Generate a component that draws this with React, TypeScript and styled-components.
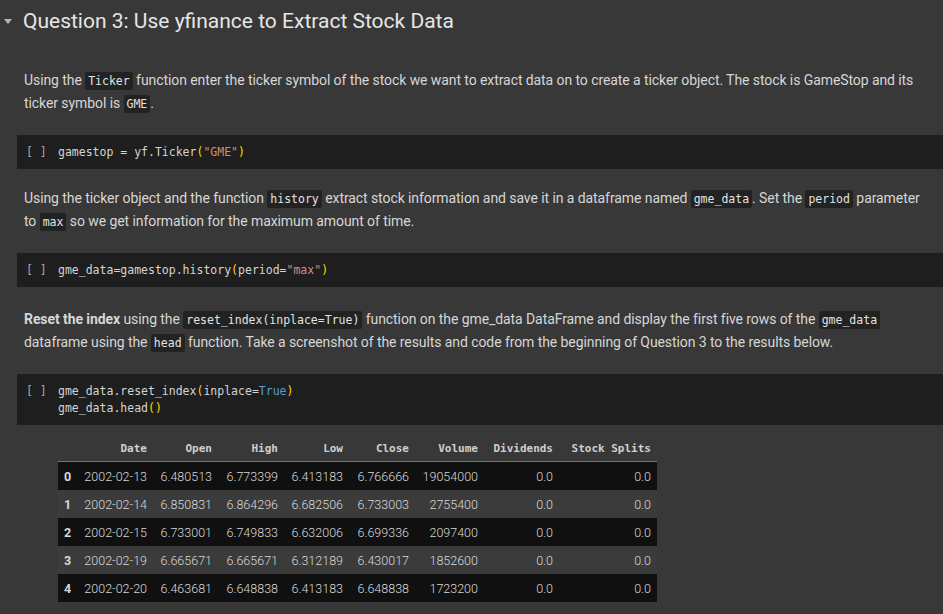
import React from "react";
import styled, { createGlobalStyle } from "styled-components";

const Global = createGlobalStyle`
  html, body { margin: 0; padding: 0; background: #383838; }
  body { font-family: Roboto, "Noto Sans", sans-serif; }
`;

const Page = styled.div`
  width: 943px;
  height: 614px;
  overflow: hidden;
  display: flex;
  flex-direction: column;
  background: #383838;
`;

const Header = styled.div`
  height: 42px;
  display: flex;
  align-items: center;
  padding-left: 4px;
  gap: 11px;
`;

const Caret = styled.span`
  width: 0;
  height: 0;
  border-left: 4.5px solid transparent;
  border-right: 4.5px solid transparent;
  border-top: 5px solid #b8b8b8;
  margin-top: 1px;
`;

const Title = styled.h2`
  margin: 0;
  font-family: Roboto, sans-serif;
  font-weight: 400;
  font-size: 21px;
  color: #e6e6e6;
  line-height: 42px;
`;

const Markdown = styled.p<{ $top?: number }>`
  margin: ${(p) => p.$top ?? 0}px 0 20px 0;
  padding: 0 16px 0 24px;
  font-family: Roboto, sans-serif;
  font-size: 14px;
  letter-spacing: -0.08px;
  line-height: 23px;
  color: #d6d6d6;
`;

const InlineCode = styled.code`
  font-family: "DejaVu Sans Mono", monospace;
  font-size: 11.5px;
  line-height: 1;
  letter-spacing: 0;
  background: #222222;
  color: #e2e2e2;
  padding: 2px 3px;
  border-radius: 2px;
`;

const Strong = styled.b`
  font-weight: 700;
`;

const CodeCell = styled.div<{ $mb?: number }>`
  margin: 0 0 ${(p) => p.$mb ?? 18}px 17px;
  background: #1e1e1e;
  display: flex;
  padding: 9px 0 8px 9px;
  font-family: "DejaVu Sans Mono", monospace;
  font-size: 11.5px;
  line-height: 17px;
  color: #d4d4d4;
`;

const RunMark = styled.div`
  width: 32px;
  color: #a8a8a8;
  white-space: pre;
`;

const CodeLines = styled.pre`
  margin: 0;
  font: inherit;
  white-space: pre;
`;

const Tok = styled.span<{ $k: "p" | "s" | "b" }>`
  color: ${(p) => (p.$k === "p" ? "#ffd700" : p.$k === "s" ? "#ce9178" : "#569cd6")};
`;

const Output = styled.div`
  padding: 10px 0 0 58px;
`;

const Table = styled.table`
  border-collapse: collapse;
  table-layout: fixed;
  width: 599px;
`;

const Col = styled.col<{ $w: number }>`
  width: ${(p) => p.$w}px;
`;

const Th = styled.th`
  font-family: "DejaVu Sans Mono", monospace;
  font-weight: 700;
  font-size: 11px;
  color: #cfcfcf;
  text-align: right;
  padding: 0 6px 0 0;
  height: 26px;
  border-bottom: 1px solid #7a746e;
  white-space: nowrap;
`;

const Row = styled.tr<{ $odd: boolean }>`
  background: ${(p) => (p.$odd ? "#3b3b3b" : "#101010")};
`;

const Idx = styled.th`
  font-family: Roboto, sans-serif;
  font-weight: 700;
  font-size: 12.5px;
  color: #d8d8d8;
  text-align: left;
  padding: 0 0 0 6px;
  height: 28px;
`;

const Td = styled.td`
  font-family: Roboto, sans-serif;
  font-weight: 300;
  font-size: 12.5px;
  color: #d8d8d8;
  text-align: right;
  padding: 0 6px 0 0;
  height: 28px;
  white-space: nowrap;
`;

const widths = [20, 75, 65, 66, 65, 66, 69, 75, 98];
const headers = ["", "Date", "Open", "High", "Low", "Close", "Volume", "Dividends", "Stock Splits"];
const rows = [
  ["2002-02-13", "6.480513", "6.773399", "6.413183", "6.766666", "19054000", "0.0", "0.0"],
  ["2002-02-14", "6.850831", "6.864296", "6.682506", "6.733003", "2755400", "0.0", "0.0"],
  ["2002-02-15", "6.733001", "6.749833", "6.632006", "6.699336", "2097400", "0.0", "0.0"],
  ["2002-02-19", "6.665671", "6.665671", "6.312189", "6.430017", "1852600", "0.0", "0.0"],
  ["2002-02-20", "6.463681", "6.648838", "6.413183", "6.648838", "1723200", "0.0", "0.0"],
];

export default function App() {
  return (
    <Page>
      <Global />
      <Header>
        <Caret />
        <Title>Question 3: Use yfinance to Extract Stock Data</Title>
      </Header>

      <Markdown $top={27}>
        Using the <InlineCode>Ticker</InlineCode> function enter the ticker symbol of the stock we want to extract data on
        to create a ticker object. The stock is GameStop and its ticker symbol is <InlineCode>GME</InlineCode>.
      </Markdown>

      <CodeCell>
        <RunMark>[ ]</RunMark>
        <CodeLines>
          gamestop = yf.Ticker<Tok $k="p">(</Tok>
          <Tok $k="s">"GME"</Tok>
          <Tok $k="p">)</Tok>
        </CodeLines>
      </CodeCell>

      <Markdown>
        Using the ticker object and the function <InlineCode>history</InlineCode> extract stock information and save it in a
        dataframe named <InlineCode>gme_data</InlineCode>. Set the <InlineCode>period</InlineCode> parameter to{" "}
        <InlineCode>max</InlineCode> so we get information for the maximum amount of time.
      </Markdown>

      <CodeCell $mb={21}>
        <RunMark>[ ]</RunMark>
        <CodeLines>
          gme_data=gamestop.history<Tok $k="p">(</Tok>period=<Tok $k="s">"max"</Tok>
          <Tok $k="p">)</Tok>
        </CodeLines>
      </CodeCell>

      <Markdown>
        <Strong>Reset the index</Strong> using the <InlineCode>reset_index(inplace=True)</InlineCode> function on the
        gme_data DataFrame and display the first five rows of the <InlineCode>gme_data</InlineCode> dataframe using the{" "}
        <InlineCode>head</InlineCode> function. Take a screenshot of the results and code from the beginning of Question 3
        to the results below.
      </Markdown>

      <CodeCell $mb={0}>
        <RunMark>[ ]</RunMark>
        <CodeLines>
          gme_data.reset_index<Tok $k="p">(</Tok>inplace=<Tok $k="b">True</Tok>
          <Tok $k="p">)</Tok>
          {"\n"}gme_data.head<Tok $k="p">()</Tok>
        </CodeLines>
      </CodeCell>

      <Output>
        <Table>
          <colgroup>
            {widths.map((w, i) => (
              <Col key={i} $w={w} />
            ))}
          </colgroup>
          <thead>
            <tr>
              {headers.map((h, i) => (
                <Th key={i}>{h}</Th>
              ))}
            </tr>
          </thead>
          <tbody>
            {rows.map((r, i) => (
              <Row key={i} $odd={i % 2 === 1}>
                <Idx>{i}</Idx>
                {r.map((c, j) => (
                  <Td key={j}>{c}</Td>
                ))}
              </Row>
            ))}
          </tbody>
        </Table>
      </Output>
    </Page>
  );
}
